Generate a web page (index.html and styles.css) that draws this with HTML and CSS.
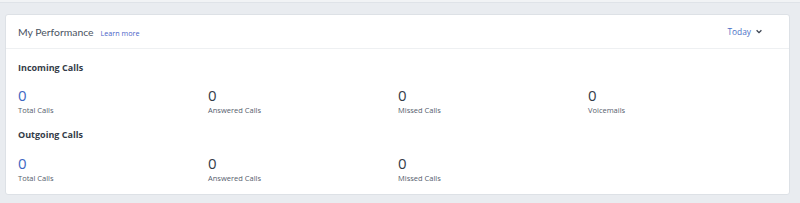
FILE: index.html
```html
<!DOCTYPE html>
<html>
<head>
<meta charset="utf-8">
<link rel="stylesheet" href="styles.css">
</head>
<body>
<div class="topline"></div>
<div class="card">
  <div class="card-header">
    <div class="title-wrap">
      <span class="title">My Performance</span>
      <a class="learn">Learn more</a>
    </div>
    <div class="period">
      <span>Today</span>
      <svg class="chev" width="6" height="5" viewBox="0 0 6 5"><path d="M0.6 1.2 L3 3.6 L5.4 1.2" fill="none" stroke="#3b4350" stroke-width="1.3"/></svg>
    </div>
  </div>
  <div class="card-body">
    <div class="section">
      <div class="section-title">Incoming Calls</div>
      <div class="stats">
        <div class="stat"><div class="num blue">0</div><div class="label">Total Calls</div></div>
        <div class="stat"><div class="num">0</div><div class="label">Answered Calls</div></div>
        <div class="stat"><div class="num">0</div><div class="label">Missed Calls</div></div>
        <div class="stat"><div class="num">0</div><div class="label">Voicemails</div></div>
      </div>
    </div>
    <div class="section">
      <div class="section-title">Outgoing Calls</div>
      <div class="stats">
        <div class="stat"><div class="num blue">0</div><div class="label">Total Calls</div></div>
        <div class="stat"><div class="num">0</div><div class="label">Answered Calls</div></div>
        <div class="stat"><div class="num">0</div><div class="label">Missed Calls</div></div>
      </div>
    </div>
  </div>
</div>
</body>
</html>
```

FILE: styles.css
```css
html, body {
  margin: 0;
  padding: 0;
}
body {
  background: #e9ecf0;
  font-family: "Open Sans", "Noto Sans", sans-serif;
  color: #3a4350;
  width: 800px;
  height: 203px;
  overflow: hidden;
}
.topline {
  height: 2px;
  background: #f1f3f5;
  border-bottom: 1px solid #dfe3e8;
}
.card {
  margin: 11px 10px 0 5px;
  background: #fff;
  border: 1px solid #dde1e6;
  border-radius: 3px;
  height: 181px;
  box-sizing: border-box;
}
.card-header {
  height: 33px;
  border-bottom: 1px solid #eef0f2;
  display: flex;
  align-items: center;
  justify-content: space-between;
  padding: 0 27px 0 12px;
}
.title-wrap {
  display: flex;
  align-items: baseline;
  gap: 7px;
}
.title {
  font-family: "Lato", "Open Sans", sans-serif;
  font-size: 10.4px;
  color: #4a5362;
}
.learn {
  font-size: 7.2px;
  color: #4a63c8;
}
.period {
  display: flex;
  align-items: center;
  gap: 5px;
  font-size: 8.4px;
  color: #4a6fc6;
}
.chev {
  display: block;
}
.card-body {
  padding: 13px 12px 0 12px;
}
.section-title {
  font-size: 9px;
  font-weight: 700;
  color: #343c48;
  line-height: 12px;
}
.stats {
  display: grid;
  grid-template-columns: repeat(4, 190px);
  margin-top: 12px;
}
.section + .section {
  margin-top: 13px;
}
.section + .section .stats {
  margin-top: 13px;
}
.num {
  font-size: 15px;
  line-height: 18px;
  color: #343c48;
}
.num.blue {
  color: #3e67c2;
}
.label {
  font-size: 7.5px;
  line-height: 12px;
  color: #56606d;
}
```
